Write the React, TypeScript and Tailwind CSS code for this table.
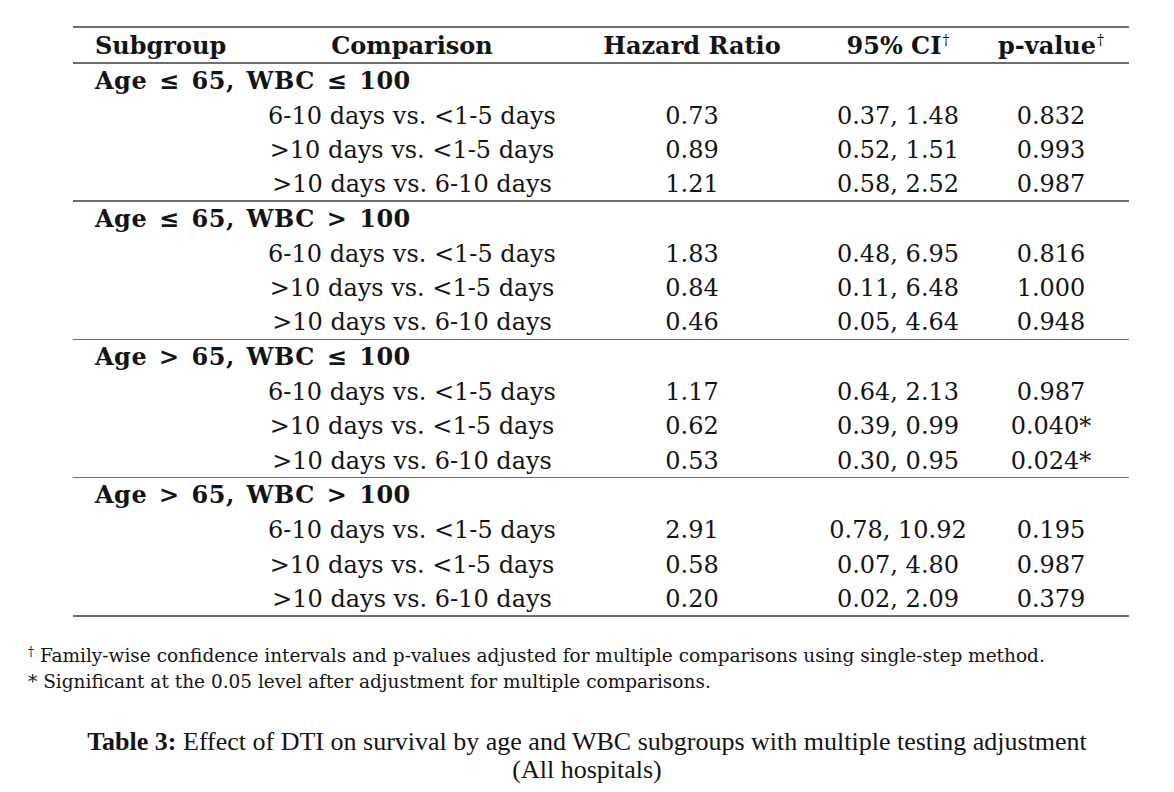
const rows = [
  {
    label: 'Age ≤ 65, WBC ≤ 100',
    items: [
      ['6-10 days vs. <1-5 days', '0.73', '0.37, 1.48', '0.832'],
      ['>10 days vs. <1-5 days', '0.89', '0.52, 1.51', '0.993'],
      ['>10 days vs. 6-10 days', '1.21', '0.58, 2.52', '0.987'],
    ],
  },
  {
    label: 'Age ≤ 65, WBC > 100',
    items: [
      ['6-10 days vs. <1-5 days', '1.83', '0.48, 6.95', '0.816'],
      ['>10 days vs. <1-5 days', '0.84', '0.11, 6.48', '1.000'],
      ['>10 days vs. 6-10 days', '0.46', '0.05, 4.64', '0.948'],
    ],
  },
  {
    label: 'Age > 65, WBC ≤ 100',
    items: [
      ['6-10 days vs. <1-5 days', '1.17', '0.64, 2.13', '0.987'],
      ['>10 days vs. <1-5 days', '0.62', '0.39, 0.99', '0.040*'],
      ['>10 days vs. 6-10 days', '0.53', '0.30, 0.95', '0.024*'],
    ],
  },
  {
    label: 'Age > 65, WBC > 100',
    items: [
      ['6-10 days vs. <1-5 days', '2.91', '0.78, 10.92', '0.195'],
      ['>10 days vs. <1-5 days', '0.58', '0.07, 4.80', '0.987'],
      ['>10 days vs. 6-10 days', '0.20', '0.02, 2.09', '0.379'],
    ],
  },
];

const cols = 'grid grid-cols-[190px_298px_262px_150px_156px]';

function Cell({ children }: { children: React.ReactNode }) {
  return (
    <div className="flex justify-center whitespace-nowrap">
      <span>{children}</span>
    </div>
  );
}

function Dagger() {
  return <span className="relative -top-[9px] ml-[1px] text-[14px] font-normal">†</span>;
}

export default function App() {
  return (
    <div className="w-[1174px] h-[792px] bg-white text-[#141414] overflow-hidden">
      <div className="ml-[73px] w-[1056px] pt-[26px] font-['DejaVu_Serif',serif] text-[24px]">
        <div className="h-[2px] bg-[#6e6e6e]" />
        <div className={`${cols} h-[34px] items-center font-bold`}>
          <div className="pl-[22px]">Subgroup</div>
          <Cell>Comparison</Cell>
          <Cell>Hazard Ratio</Cell>
          <Cell>
            95% CI<Dagger />
          </Cell>
          <Cell>
            p-value<Dagger />
          </Cell>
        </div>
        <div className="h-[1.5px] bg-[#6e6e6e]" />
        {rows.map((g, gi) => (
          <div key={gi}>
            <div className="h-[34.2px] flex items-center pl-[22px] font-bold tracking-[0.5px] [word-spacing:3px]">
              {g.label}
            </div>
            {g.items.map((r, ri) => (
              <div key={ri} className={`${cols} h-[34.2px] items-center`}>
                <div />
                <Cell>{r[0]}</Cell>
                <Cell>{r[1]}</Cell>
                <Cell>{r[2]}</Cell>
                <Cell>{r[3]}</Cell>
              </div>
            ))}
            <div className={gi === rows.length - 1 ? 'h-[2px] bg-[#6e6e6e]' : 'h-[1.5px] bg-[#6e6e6e]'} />
          </div>
        ))}
      </div>

      <div className="mt-[27px] pl-[28px] font-['DejaVu_Serif',serif] text-[18.5px] leading-[23px]">
        <p>
          <span className="relative -top-[6px] text-[12px]">†</span> Family-wise confidence intervals and p-values adjusted for multiple comparisons using single-step method.
        </p>
        <p>* Significant at the 0.05 level after adjustment for multiple comparisons.</p>
      </div>

      <div className="mt-[35px] text-center font-['Liberation_Serif',serif] text-[26px] leading-[28px]">
        <p>
          <span className="font-bold">Table 3:</span> Effect of DTI on survival by age and WBC subgroups with multiple testing adjustment
        </p>
        <p>(All hospitals)</p>
      </div>
    </div>
  );
}
